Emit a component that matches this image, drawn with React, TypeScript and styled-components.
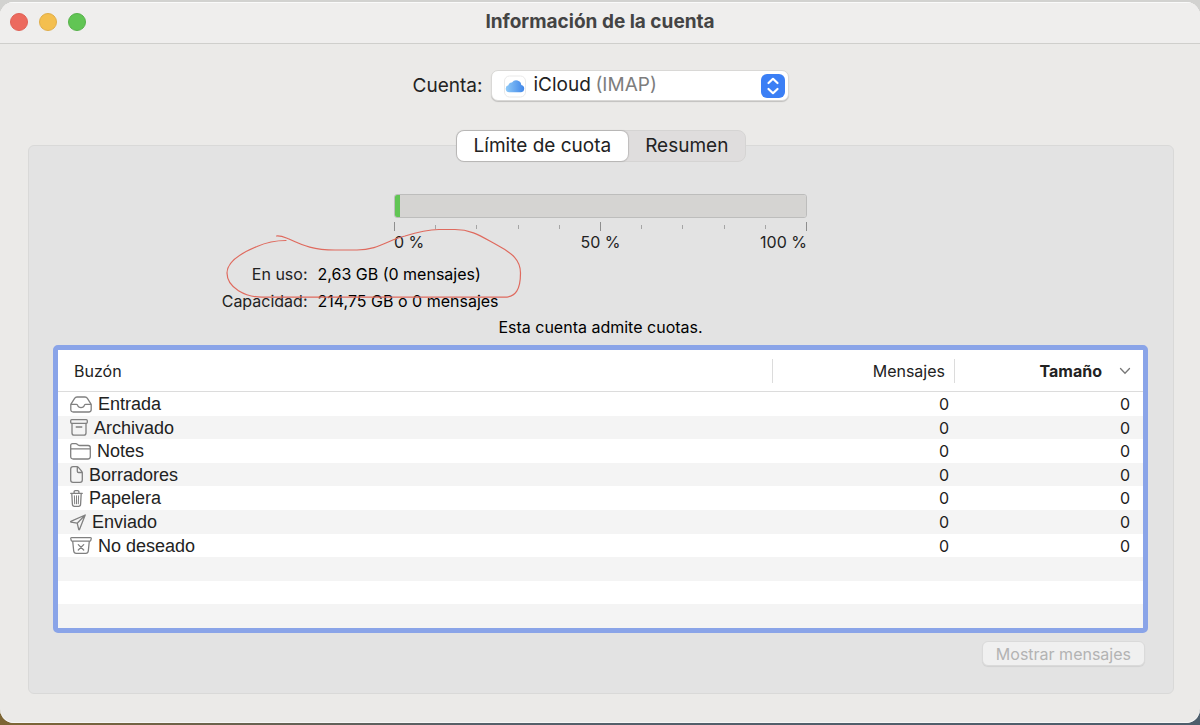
import React, { useState } from "react";
import styled, { createGlobalStyle, css } from "styled-components";

const sans = `Inter, "Noto Sans", sans-serif`;

const GlobalStyle = createGlobalStyle`
  * { box-sizing: border-box; }
  body {
    margin: 0;
    background: #59646c;
    font-family: ${sans};
    color: #222;
  }
  button, select { font-family: inherit; color: inherit; }
`;

const Desktop = styled.div`
  min-height: 100vh;
  display: flex;
  padding: 2px 0;
  background: linear-gradient(to bottom, #d2d2d0 50%, transparent 50%),
    linear-gradient(to right, #7d6534, #55606a 40%, #4d5e6c);
`;

const Window = styled.main`
  flex: 1;
  display: flex;
  flex-direction: column;
  background: #ebeae8;
  border-radius: 14px;
  box-shadow: inset 0 1px 0 #fbfbfa, inset 0 -1px 0 #f6f6f6;
  overflow: hidden;
`;

const TitleBar = styled.header`
  display: grid;
  grid-template-columns: 1fr auto 1fr;
  align-items: center;
  height: 42px;
  padding: 0 10px 2px;
  background: #efeeed;
  border-top: 1px solid #fafafa;
  border-bottom: 1px solid #cfcfcc;
`;

const Lights = styled.div`
  display: flex;
  gap: 11px;
`;

const Light = styled.button<{ $color: string; $edge: string }>`
  width: 18px;
  height: 18px;
  padding: 0;
  border: 1px solid ${(p) => p.$edge};
  border-radius: 50%;
  background: ${(p) => p.$color};
`;

const Title = styled.h1`
  margin: 0;
  font-size: 19px;
  line-height: 24px;
  font-weight: 700;
  color: #444;
`;

const Controls = styled.div`
  display: flex;
  flex-direction: column;
  align-items: center;
  gap: 29px;
  padding: 26px 0 0 2px;
`;

const AccountRow = styled.div`
  display: flex;
  align-items: center;
  gap: 9px;
  font-size: 19px;
`;

const SelectBox = styled.div`
  position: relative;
  width: 298px;
  height: 31px;
`;

const AccountSelect = styled.select`
  appearance: none;
  width: 100%;
  height: 100%;
  padding: 0 40px 2px 41px;
  border: 1px solid #d9d8d6;
  border-radius: 7px;
  background: #fff;
  box-shadow: 0 1px 1px rgba(0, 0, 0, 0.18);
  font-size: 19px;
`;

const SelectOverlay = styled.span<{ $left?: number; $right?: number }>`
  position: absolute;
  top: 0;
  bottom: 0;
  ${(p) => (p.$left !== undefined ? `left: ${p.$left}px;` : `right: ${p.$right}px;`)}
  display: flex;
  align-items: center;
  pointer-events: none;
  color: #7d7d7d;
`;

const Protocol = styled.span`
  padding-bottom: 2px;
`;

const Tabs = styled.div`
  position: relative;
  display: flex;
  border: 1px solid #d5d4d3;
  border-radius: 8px;
  background: #dfdddd;
`;

const Tab = styled.button<{ $active: boolean }>`
  height: 30px;
  padding: 0 17px 1px;
  border: 0;
  border-radius: 7px;
  background: transparent;
  font-size: 19px;
  line-height: 24px;
  ${(p) =>
    p.$active &&
    css`
      background: #fff;
      box-shadow: 0 0 1px 1px rgba(0, 0, 0, 0.15);
    `}
`;

const Panel = styled.section`
  flex: 1;
  display: flex;
  flex-direction: column;
  margin: -17px 26px 29px 28px;
  padding: 48px 25px 24px 24px;
  border: 1px solid #d9d9d8;
  border-radius: 6px;
  background: #e3e3e3;
`;

const Gauge = styled.div`
  align-self: center;
  width: 413px;
`;

const Bar = styled.progress`
  display: block;
  appearance: none;
  width: 100%;
  height: 24px;
  border: 1px solid #bdbdbc;
  border-radius: 3px;
  overflow: hidden;
  background: #d5d4d2;
  &::-webkit-progress-bar {
    background: #d5d4d2;
  }
  &::-webkit-progress-value {
    background: #61c554;
  }
`;

const Ticks = styled.div`
  display: flex;
  justify-content: space-between;
  align-items: center;
  height: 9px;
  margin-top: 4px;
`;

const Tick = styled.span<{ $major: boolean }>`
  width: 1px;
  height: ${(p) => (p.$major ? 9 : 4)}px;
  background: ${(p) => (p.$major ? "#8e8e8e" : "#a5a5a5")};
`;

const Scale = styled.div`
  display: grid;
  grid-template-columns: 1fr auto 1fr;
  margin-top: 1px;
  font-size: 16px;
  line-height: 20px;
  & > :last-child {
    text-align: right;
  }
`;

const Usage = styled.div`
  position: relative;
  align-self: center;
  width: 760px;
  max-width: 100%;
  margin-top: 9px;
`;

const UsageList = styled.dl`
  display: grid;
  grid-template-columns: 87px 1fr;
  column-gap: 10px;
  margin: 0;
  font-size: 16px;
  line-height: 27px;
`;

const Term = styled.dt`
  text-align: right;
  white-space: nowrap;
`;

const Detail = styled.dd`
  margin: 0;
  color: #000;
`;

const Scribble = styled.svg`
  position: absolute;
  left: 0;
  top: -41px;
  pointer-events: none;
`;

const Support = styled.p`
  margin: 0;
  text-align: center;
  font-size: 16px;
  line-height: 24px;
  color: #000;
`;

const TableFrame = styled.div`
  margin-top: 6px;
  border: 5px solid #8aa4e8;
  border-radius: 5px;
  background: #fff;
`;

const MailTable = styled.table`
  width: 100%;
  table-layout: fixed;
  border-collapse: separate;
  border-spacing: 0;
  font-size: 16px;
`;

const Head = styled.th<{ $width?: number }>`
  ${(p) => p.$width && `width: ${p.$width}px;`}
  height: 42px;
  padding: 0;
  border-bottom: 1px solid #dcdcdc;
  font-weight: 400;
`;

const HeadLabel = styled.div<{ $start?: boolean; $last?: boolean }>`
  display: flex;
  align-items: center;
  justify-content: ${(p) => (p.$start ? "flex-start" : "flex-end")};
  gap: 17px;
  height: 24px;
  padding: 0 ${(p) => (p.$last ? 12 : 9)}px 0 16px;
  border-right: ${(p) => (p.$last ? "0" : "1px solid #dcdcdc")};
  font-weight: ${(p) => (p.$last ? 700 : 400)};
`;

const Row = styled.tr`
  height: 24px;
  &:nth-child(even) {
    background: #f4f4f4;
  }
  &:nth-child(5n + 2),
  &:nth-child(5n + 4) {
    height: 23px;
  }
`;

const Cell = styled.td<{ $end?: number }>`
  padding: 0 ${(p) => p.$end || 0}px 0 0;
  text-align: ${(p) => (p.$end ? "right" : "left")};
  line-height: 20px;
`;

const Mailbox = styled.div`
  display: flex;
  align-items: center;
  gap: 6px;
  height: 22px;
  padding-left: 12px;
  font-family: "Liberation Sans", Arial, sans-serif;
  font-size: 18px;
  line-height: 20px;
`;

const Footer = styled.footer`
  display: flex;
  justify-content: flex-end;
  margin-top: 8px;
  padding-right: 3px;
`;

const ShowButton = styled.button`
  height: 25px;
  padding: 0 13px;
  border: 1px solid #dadada;
  border-radius: 6px;
  background: #f0f0f0;
  box-shadow: 0 1px 1px rgba(0, 0, 0, 0.08);
  font-size: 16px;
  line-height: 20px;
  &:disabled {
    color: #b3b3b3;
  }
`;

type GlyphProps = { w: number; h: number; children: React.ReactNode };
const Glyph = ({ w, h, children }: GlyphProps) => (
  <svg
    width={w}
    height={h}
    viewBox={`0 0 ${w} ${h}`}
    fill="none"
    stroke="#808080"
    strokeWidth="1.3"
    strokeLinecap="round"
    strokeLinejoin="round"
    aria-hidden="true"
  >
    {children}
  </svg>
);

const mailboxes = [
  {
    name: "Entrada",
    icon: (
      <Glyph w={22} h={17}>
        <path d="M.8 8.3 4.6 2.3Q5.4 1 7 1h8q1.6 0 2.4 1.3l3.8 6v5.2q0 2.500-2.500 2.500H3.300Q.8 16 .8 13.500zM.8 8.400h5.700q1 0 1.200 1Q8.300 11.600 11 11.600t3.300-2.200q.2-1 1.200-1h5.700" />
      </Glyph>
    ),
  },
  {
    name: "Archivado",
    icon: (
      <Glyph w={18} h={17}>
        <rect x=".7" y=".7" width="16.6" height="3.6" rx="1" />
        <path d="M2 4.300v9.600q0 2.300 2.300 2.300h9.400q2.300 0 2.300-2.300V4.300M6.200 8h5.600" />
      </Glyph>
    ),
  },
  {
    name: "Notes",
    icon: (
      <Glyph w={21} h={17}>
        <path d="M.7 13.500v-11Q.7.700 2.500.7h3.200q1 0 1.800.7l.6.500q.7.600 1.700.6h8.300q2.200 0 2.200 2.200v8.800q0 2.500-2.500 2.500H3.200Q.7 16 .7 13.500zM.7 5.900h19.600" />
      </Glyph>
    ),
  },
  {
    name: "Borradores",
    icon: (
      <Glyph w={13} h={17}>
        <path d="M7.200.7H3Q.7.700.7 3v11q0 2.300 2.300 2.300h7q2.300 0 2.300-2.300V6.600q0-.7-.5-1.200L8.200 1.200Q7.800.7 7.200.7zM7.300.9v4.300q0 1.300 1.300 1.300h3.500" />
      </Glyph>
    ),
  },
  {
    name: "Papelera",
    icon: (
      <Glyph w={13} h={17}>
        <path d="M.7 3.300h11.600M4.100 3.200V2q0-1.300 1.300-1.300h2.200Q8.900.7 8.900 2v1.200M1.800 3.500l.6 10.800q.1 2 2 2h4.200q1.900 0 2-2l.6-10.800" />
        <path strokeWidth="1" d="M4.400 5.800l.3 8M6.500 5.800v8M8.600 5.800l-.3 8" />
      </Glyph>
    ),
  },
  {
    name: "Enviado",
    icon: (
      <Glyph w={16} h={17}>
        <path d="M15.200 1 .8 7.400q-.5.400.1.700l6.300 1.100 1.500 6.200q.4.700.8 0zM7.200 9.200l8-8.200" />
      </Glyph>
    ),
  },
  {
    name: "No deseado",
    icon: (
      <Glyph w={22} h={17}>
        <path d="M1.600.7h18.800q1 0 .8 1l-.4 1.600q-.2.900-1.200.9H2.400q-1 0-1.200-.9L.8 1.700q-.2-1 .8-1zM2.700 4.300l1 9.700q.3 2.300 2.500 2.300h9.600q2.200 0 2.500-2.300l1-9.700M8.300 7.600l5.400 5.400M13.700 7.600 8.300 13" />
      </Glyph>
    ),
  },
];

const CloudIcon = () => (
  <svg width="24" height="24" viewBox="0 0 24 24" aria-hidden="true">
    <defs>
      <linearGradient id="cloud" x1="0" y1="0" x2="1" y2="0">
        <stop offset="0" stopColor="#8fcaf8" />
        <stop offset="1" stopColor="#3f86e9" />
      </linearGradient>
    </defs>
    <rect x="1.5" y="2" width="21" height="21" rx="5" fill="#fff" stroke="#e9e9e9" />
    <path
      d="M6.300 18.200a3.500 3.500 0 0 1-.9-6.900 3 3 0 0 1 3.600-2.700 5.100 5.100 0 0 1 9.300 2.500 3.600 3.600 0 0 1-.2 7.100z"
      fill="url(#cloud)"
    />
  </svg>
);

const Stepper = () => (
  <svg width="24" height="24" viewBox="0 0 24 24" aria-hidden="true">
    <rect width="24" height="24" rx="6" fill="#3b7ff5" />
    <path
      d="m7.500 9 4.500-4.200L16.500 9M7.500 15l4.500 4.200 4.500-4.200"
      fill="none"
      stroke="#fff"
      strokeWidth="2.2"
      strokeLinecap="round"
      strokeLinejoin="round"
    />
  </svg>
);

const tabs = ["Límite de cuota", "Resumen"];
const used = 2.63;
const capacity = 214.75;
const tableRows = [...mailboxes, null, null, null];

export default function App() {
  const [tab, setTab] = useState(0);
  return (
    <>
      <GlobalStyle />
      <Desktop>
        <Window>
          <TitleBar>
            <Lights>
              <Light $color="#ec6a5e" $edge="#df6156" aria-label="Cerrar" />
              <Light $color="#f4bf4f" $edge="#dfad49" aria-label="Minimizar" />
              <Light $color="#61c554" $edge="#57b14b" aria-label="Ampliar" />
            </Lights>
            <Title>Información de la cuenta</Title>
          </TitleBar>

          <Controls>
            <AccountRow>
              <label htmlFor="account">Cuenta:</label>
              <SelectBox>
                <AccountSelect id="account">
                  <option>iCloud</option>
                </AccountSelect>
                <SelectOverlay $left={12}>
                  <CloudIcon />
                </SelectOverlay>
                <SelectOverlay $left={104}>
                  <Protocol>(IMAP)</Protocol>
                </SelectOverlay>
                <SelectOverlay $right={4}>
                  <Stepper />
                </SelectOverlay>
              </SelectBox>
            </AccountRow>

            <Tabs role="tablist">
              {tabs.map((name, i) => (
                <Tab
                  key={name}
                  role="tab"
                  aria-selected={tab === i}
                  $active={tab === i}
                  onClick={() => setTab(i)}
                >
                  {name}
                </Tab>
              ))}
            </Tabs>
          </Controls>

          <Panel>
            <Gauge>
              <Bar value={used} max={capacity} aria-label="Espacio en uso" />
              <Ticks>
                {Array.from({ length: 11 }, (_, i) => (
                  <Tick key={i} $major={i % 5 === 0} />
                ))}
              </Ticks>
              <Scale>
                <span>0 %</span>
                <span>50 %</span>
                <span>100 %</span>
              </Scale>
            </Gauge>

            <Usage>
              <UsageList>
                <Term>En uso:</Term>
                <Detail>2,63 GB (0 mensajes)</Detail>
                <Term>Capacidad:</Term>
                <Detail>214,75 GB o 0 mensajes</Detail>
              </UsageList>
              <Scribble width="310" height="84" viewBox="221 220 310 84" aria-hidden="true">
                <path
                  d="M276.500 236C281 235.500 285 237.500 289 239C304 246 314 250 335 250H357C378 250 388 240 405 236C418 232 428 229.800 439 229.500H455C472 229.500 482 237 497 245C512 253 520.500 260 520.500 273C520.500 289 516 297.200 504 297.200H262C246 297 227 288 227 273C227 260 246 251 257 246.500C266 242.500 276 240.500 286 240.500"
                  fill="none"
                  stroke="#df6a5e"
                  strokeWidth="1.2"
                  strokeLinecap="round"
                />
              </Scribble>
            </Usage>
            <Support>Esta cuenta admite cuotas.</Support>

            <TableFrame>
              <MailTable>
                <thead>
                  <tr>
                    <Head scope="col">
                      <HeadLabel $start>Buzón</HeadLabel>
                    </Head>
                    <Head scope="col" $width={182}>
                      <HeadLabel>Mensajes</HeadLabel>
                    </Head>
                    <Head scope="col" $width={188} aria-sort="descending">
                      <HeadLabel $last>
                        Tamaño
                        <svg width="12" height="8" viewBox="0 0 12 8" aria-hidden="true">
                          <path
                            d="m1.500 1.500 4.500 4.800 4.500-4.800"
                            fill="none"
                            stroke="#777"
                            strokeWidth="1.3"
                            strokeLinecap="round"
                          />
                        </svg>
                      </HeadLabel>
                    </Head>
                  </tr>
                </thead>
                <tbody>
                  {tableRows.map((box, i) => (
                    <Row key={i}>
                      <Cell>
                        {box && (
                          <Mailbox>
                            {box.icon}
                            {box.name}
                          </Mailbox>
                        )}
                      </Cell>
                      <Cell $end={6}>{box && "0"}</Cell>
                      <Cell $end={13}>{box && "0"}</Cell>
                    </Row>
                  ))}
                </tbody>
              </MailTable>
            </TableFrame>

            <Footer>
              <ShowButton disabled>Mostrar mensajes</ShowButton>
            </Footer>
          </Panel>
        </Window>
      </Desktop>
    </>
  );
}
